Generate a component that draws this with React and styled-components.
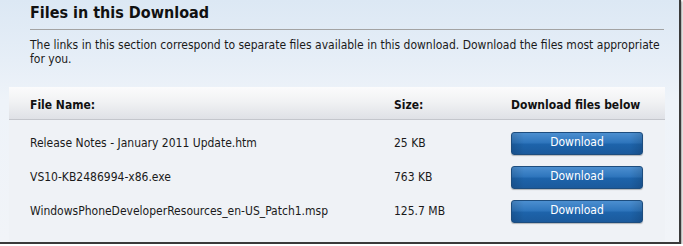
import React from "react";
import styled, { createGlobalStyle } from "styled-components";

const Global = createGlobalStyle`
  html, body { margin: 0; padding: 0; background: #ffffff; }
  body { font-family: "DejaVu Sans Condensed", "Liberation Sans", sans-serif; }
`;

const Frame = styled.div`
  width: 681px;
  height: 244px;
  box-sizing: border-box;
  border-right: 2px solid #3a3a3a;
  border-bottom: 2px solid #3a3a3a;
  box-shadow: 1px 1px 2px rgba(0, 0, 0, 0.4);
  background: linear-gradient(180deg, #dce8f4 0px, #e6eef7 60px, #eef3f9 100px, #f1f4f8 242px);
  overflow: hidden;
  display: flex;
  flex-direction: column;
`;

const Head = styled.div`
  padding: 0 15px 0 30px;
`;

const Title = styled.h2`
  margin: 0;
  padding-top: 3px;
  height: 29px;
  box-sizing: border-box;
  font-size: 16px;
  line-height: 20px;
  font-weight: bold;
  color: #111;
`;

const Rule = styled.hr`
  margin: 0;
  border: 0;
  height: 1px;
  background: #a3a3a3;
`;

const Desc = styled.p`
  margin: 0;
  padding-top: 8px;
  font-size: 12px;
  line-height: 14px;
  color: #1a1a1a;
  height: 57px;
  box-sizing: border-box;
`;

const Panel = styled.div`
  margin: 0 14px 0 9px;
  flex: 1;
  background: #eff2f6;
`;

const cols = `
  display: grid;
  grid-template-columns: 364px 117px 132px;
  padding-left: 21px;
  align-items: center;
`;

const HeaderRow = styled.div`
  ${cols}
  height: 33px;
  box-sizing: border-box;
  border-bottom: 1px solid #c4c6cc;
  background: linear-gradient(180deg, #fbfbfc 0%, #f1f2f4 45%, #dfe1e6 100%);
  font-size: 12px;
  font-weight: bold;
  color: #111;
  padding-top: 4px;
`;

const Rows = styled.div`
  padding-top: 6px;
  display: flex;
  flex-direction: column;
`;

const Row = styled.div`
  ${cols}
  height: 34px;
  font-size: 12px;
  color: #1a1a1a;
`;

const DownloadButton = styled.button`
  width: 132px;
  height: 23px;
  margin: 0;
  padding: 0 0 2px;
  border: 1px solid #1d4d7e;
  border-radius: 3px;
  background:
    linear-gradient(90deg, rgba(0,0,0,0.12) 0px, rgba(0,0,0,0) 12px, rgba(0,0,0,0) 118px, rgba(0,0,0,0.12) 130px),
    linear-gradient(180deg, #4c8fd0 0%, #2f76bd 45%, #1d63aa 55%, #1b5a9c 100%);
  box-shadow: 0 1px 1px rgba(0, 0, 0, 0.25);
  color: #ffffff;
  font-family: "DejaVu Sans Condensed", "Liberation Sans", sans-serif;
  font-size: 12px;
  line-height: 19px;
  cursor: pointer;
`;

const files = [
  { name: "Release Notes - January 2011 Update.htm", size: "25 KB" },
  { name: "VS10-KB2486994-x86.exe", size: "763 KB" },
  { name: "WindowsPhoneDeveloperResources_en-US_Patch1.msp", size: "125.7 MB" },
];

export default function App() {
  return (
    <>
      <Global />
      <Frame>
        <Head>
          <Title>Files in this Download</Title>
          <Rule />
          <Desc>
            The links in this section correspond to separate files available in this download. Download the files most appropriate for you.
          </Desc>
        </Head>
        <Panel>
          <HeaderRow>
            <span>File Name:</span>
            <span>Size:</span>
            <span>Download files below</span>
          </HeaderRow>
          <Rows>
            {files.map((f) => (
              <Row key={f.name}>
                <span>{f.name}</span>
                <span>{f.size}</span>
                <DownloadButton>Download</DownloadButton>
              </Row>
            ))}
          </Rows>
        </Panel>
      </Frame>
    </>
  );
}
